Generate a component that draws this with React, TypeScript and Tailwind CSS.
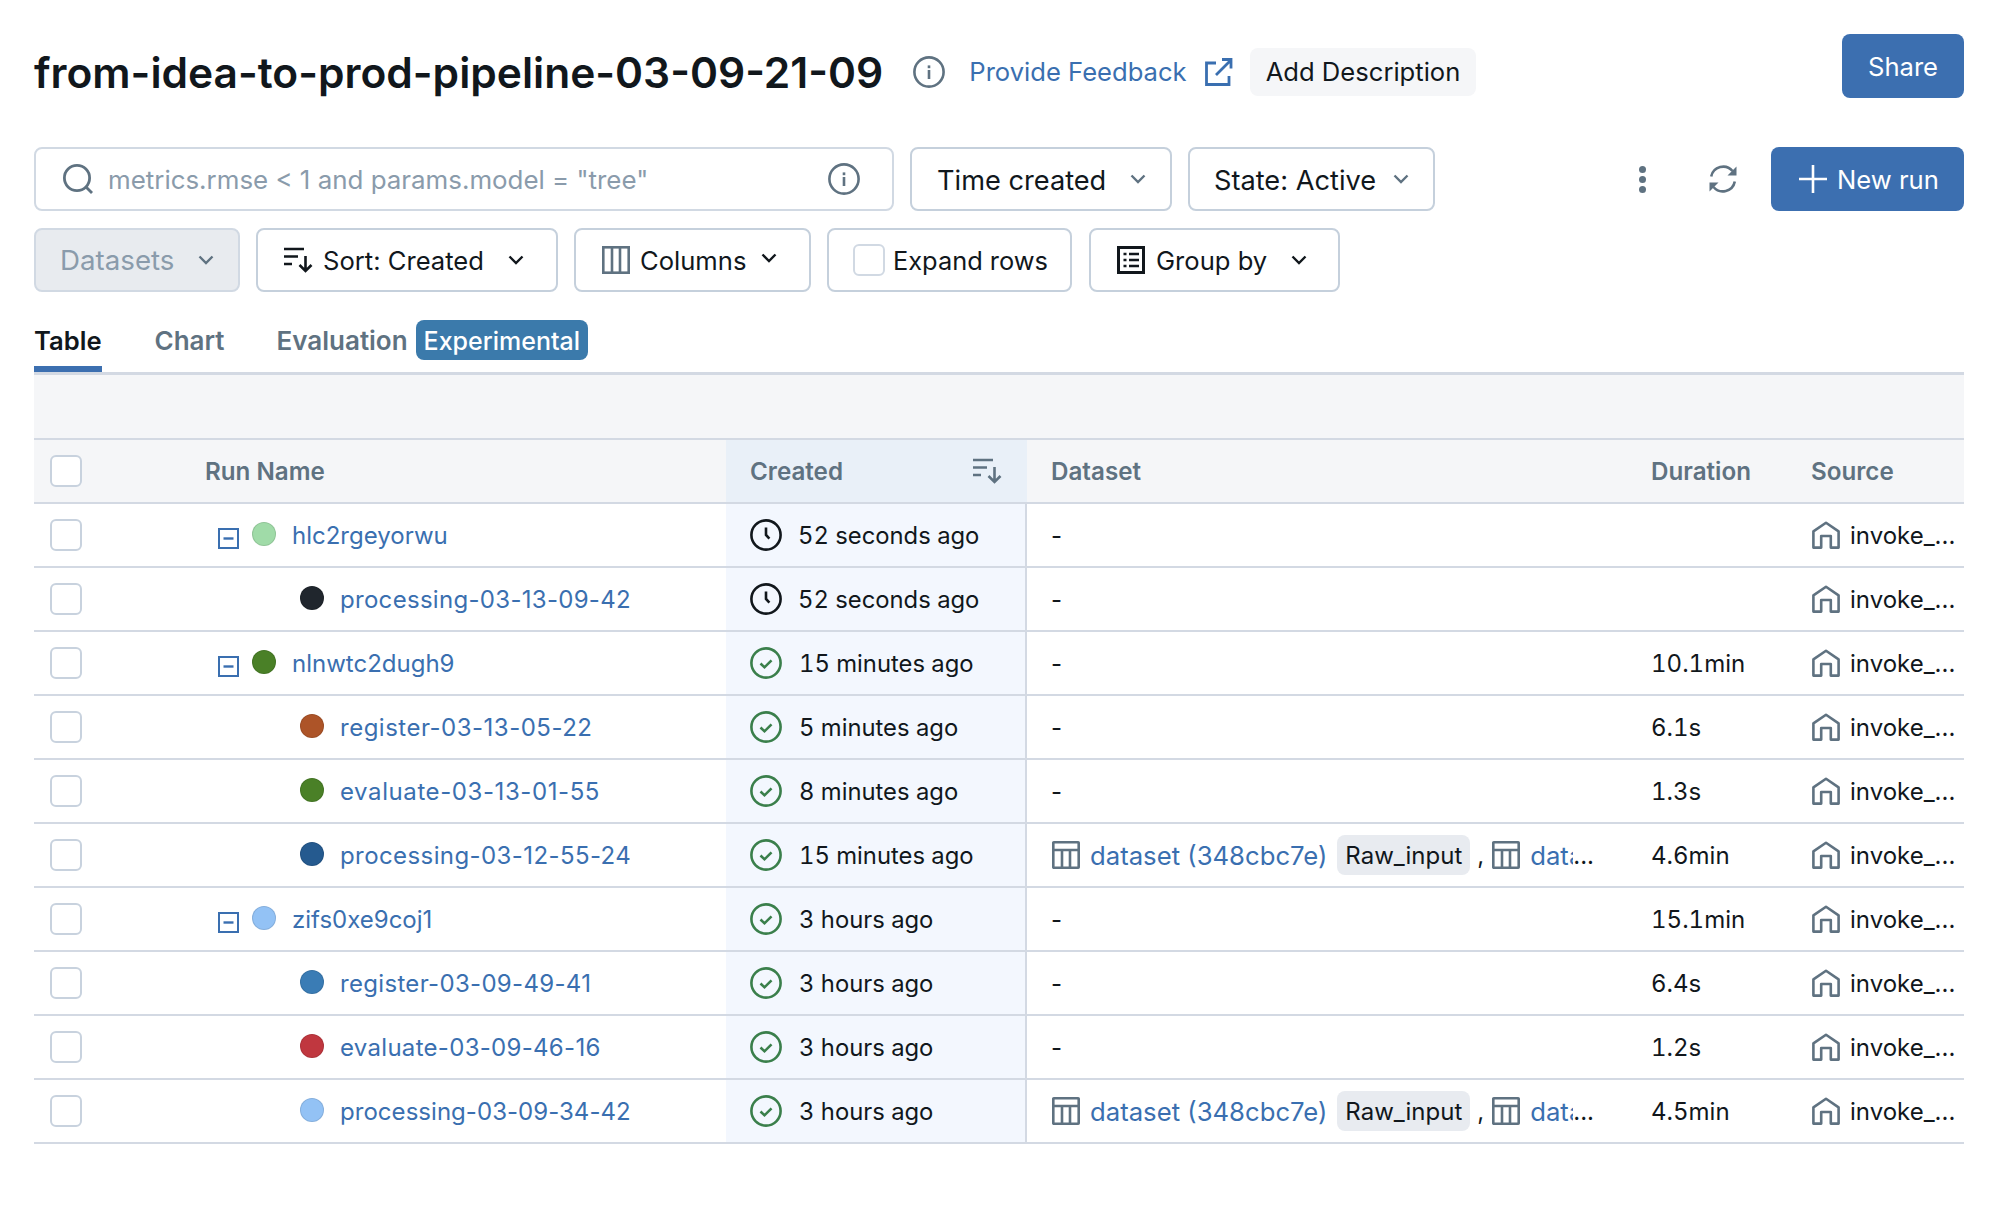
import React from "react";

const font = { fontFamily: "Inter, 'Liberation Sans', sans-serif" };

function Chevron({ className = "" }: { className?: string }) {
  return (
    <svg width="16" height="10" viewBox="0 0 16 10" fill="none" className={`shrink-0 ${className}`}>
      <path d="M1.5 1.5 8 8l6.5-6.5" stroke="currentColor" strokeWidth="2.4" />
    </svg>
  );
}
function Info({ size = 32 }: { size?: number }) {
  return (
    <svg width={size} height={size} viewBox="0 0 32 32" fill="none" className="shrink-0 text-[#5f7281]">
      <circle cx="16" cy="16" r="14.6" stroke="currentColor" strokeWidth="2.6" />
      <rect x="14.7" y="14" width="2.6" height="9" fill="currentColor" />
      <rect x="14.7" y="9.4" width="2.6" height="2.8" fill="currentColor" />
    </svg>
  );
}
function SortIcon({ className = "" }: { className?: string }) {
  return (
    <svg width="30" height="26" viewBox="0 0 30 26" fill="none" className={`shrink-0 ${className}`}>
      <path d="M0 2h20M0 9.5h14M0 17h8" stroke="currentColor" strokeWidth="2.6" />
      <path d="M21.5 9v15M15.5 18l6 6 6-6" stroke="currentColor" strokeWidth="2.6" />
    </svg>
  );
}
function TableIcon() {
  return (
    <svg width="28" height="28" viewBox="0 0 28 28" fill="none" className="shrink-0 text-[#5f7281]">
      <rect x="1.3" y="1.3" width="25.4" height="25.4" rx="0.5" stroke="currentColor" strokeWidth="2.6" />
      <path d="M1 9h26M10 9v18M18 9v18" stroke="currentColor" strokeWidth="2.6" />
    </svg>
  );
}
function HomeIcon() {
  return (
    <svg width="28" height="28" viewBox="0 0 28 28" fill="none" className="shrink-0 ml-px text-[#5f7281]">
      <path
        d="M1.4 26.6V10.4L14 1.8l12.6 8.6v16.2h-7.8V15H9.2v11.6H1.4Z"
        stroke="currentColor"
        strokeWidth="2.6"
        strokeLinejoin="round"
      />
    </svg>
  );
}
function Clock() {
  return (
    <svg width="32" height="32" viewBox="0 0 32 32" fill="none" className="shrink-0 text-[#11171c]">
      <circle cx="16" cy="16" r="14.6" stroke="currentColor" strokeWidth="2.6" />
      <path d="M16 8.5V16l3.4 3.6" stroke="currentColor" strokeWidth="2.6" />
    </svg>
  );
}
function Check() {
  return (
    <svg width="32" height="32" viewBox="0 0 32 32" fill="none" className="shrink-0 text-[#3a7f4b]">
      <circle cx="16" cy="16" r="14.6" stroke="currentColor" strokeWidth="2.6" />
      <path d="M10.5 16.5l4 3.8 7-7" stroke="currentColor" strokeWidth="2.6" />
    </svg>
  );
}
function Minus() {
  return (
    <svg width="21" height="21" viewBox="0 0 21 21" fill="none" className="shrink-0 mt-[6px] text-[#3a6fb0]">
      <rect x="1" y="1" width="19" height="19" stroke="currentColor" strokeWidth="2" />
      <path d="M5.5 10.5h10" stroke="currentColor" strokeWidth="2.4" />
    </svg>
  );
}
function Box() {
  return <div className="w-8 h-8 shrink-0 rounded-[6px] border-2 border-[#c8d2de] bg-white" />;
}

const btn =
  "h-16 flex items-center rounded-lg border-2 border-[#c5d0dc] bg-white leading-8 text-[#11171c] shrink-0 whitespace-nowrap";

type Row = {
  name: string;
  color: string;
  parent?: boolean;
  ago: string;
  done: boolean;
  duration?: string;
  dataset?: boolean;
  track?: string;
};

const rows: Row[] = [
  { name: "hlc2rgeyorwu", color: "#a0dba8", parent: true, ago: "52 seconds ago", done: false },
  { name: "processing-03-13-09-42", color: "#20262d", ago: "52 seconds ago", done: false, track: "tracking-[0.3px]" },
  { name: "nlnwtc2dugh9", color: "#4a8027", parent: true, ago: "15 minutes ago", done: true, duration: "10.1min" },
  { name: "register-03-13-05-22", color: "#ad5428", ago: "5 minutes ago", done: true, duration: "6.1s", track: "tracking-[0.5px]" },
  { name: "evaluate-03-13-01-55", color: "#4a8027", ago: "8 minutes ago", done: true, duration: "1.3s", track: "tracking-[0.59px]" },
  { name: "processing-03-12-55-24", color: "#255a8f", ago: "15 minutes ago", done: true, duration: "4.6min", dataset: true, track: "tracking-[0.41px]" },
  { name: "zifs0xe9coj1", color: "#93c2f5", parent: true, ago: "3 hours ago", done: true, duration: "15.1min" },
  { name: "register-03-09-49-41", color: "#3a7cb5", ago: "3 hours ago", done: true, duration: "6.4s", track: "tracking-[0.32px]" },
  { name: "evaluate-03-09-46-16", color: "#c0373f", ago: "3 hours ago", done: true, duration: "1.2s", track: "tracking-[0.3px]" },
  { name: "processing-03-09-34-42", color: "#93c2f5", ago: "3 hours ago", done: true, duration: "4.5min", dataset: true, track: "tracking-[0.04px]" },
];

function DataRow({ r }: { r: Row }) {
  return (
    <div className="flex h-16 border-b-2 border-[#d3d9e3] text-[24px] leading-8 text-[#11171c]">
      <div className="w-[692px] flex items-center pl-4">
        <Box />
        {r.parent ? (
          <div className="flex items-center pl-[136px]">
            <Minus />
            <span
              className="w-6 h-6 rounded-full ml-[13px] mt-[-2px] border border-black/10"
              style={{ backgroundColor: r.color }}
            />
            <span className="ml-4 pt-px text-[#3a6fb0]">{r.name}</span>
          </div>
        ) : (
          <div className="flex items-center pl-[218px]">
            <span className="w-6 h-6 rounded-full mt-[-2px] border border-black/10" style={{ backgroundColor: r.color }} />
            <span className={`ml-4 pt-px text-[#3a6fb0] ${r.track ?? ""}`}>{r.name}</span>
          </div>
        )}
      </div>
      <div className="w-[301px] flex items-center pl-6 bg-[#f3f7fe] border-r-2 border-[#d3d9e3]">
        {r.done ? <Check /> : <Clock />}
        <span className={r.done ? "ml-[17px] pt-px text-[23.8px] tabular-nums" : "ml-4 pt-px text-[23.8px] tabular-nums"}>
          {r.ago}
        </span>
      </div>
      <div className="w-[600px] flex items-center pl-6 whitespace-nowrap">
        {r.dataset ? (
          <>
            <span className="ml-px">
              <TableIcon />
            </span>
            <span className="ml-[10px] pt-px text-[25.7px] text-[#3a6fb0]">dataset (348cbc7e)</span>
            <span className="ml-[10px] h-10 flex items-center px-2 pt-px rounded-lg bg-[#e8ebf0]">Raw_input</span>
            <span className="ml-[7px] pt-px">,</span>
            <span className="ml-2">
              <TableIcon />
            </span>
            <span className="ml-[10px] pt-px w-[43px] overflow-hidden text-[25.7px] text-[#3a6fb0]">data</span>
            <span className="pt-px">...</span>
          </>
        ) : (
          <span className="pt-px">-</span>
        )}
      </div>
      <div className="w-[160px] flex items-center pl-6">
        <span className="pt-px tabular-nums">{r.duration}</span>
      </div>
      <div className="w-[177px] flex items-center pl-6 whitespace-nowrap">
        <HomeIcon />
        <span className="ml-[10px] pt-px">invoke_...</span>
      </div>
    </div>
  );
}

export default function App() {
  return (
    <div className="min-h-[1212px] bg-white pl-[34px] pr-[28px] pt-[34px]" style={font}>
      <div className="flex items-center justify-between h-16">
        <div className="flex items-center pt-3">
          <h1 className="text-[42.5px] leading-[48px] pt-[2px] font-semibold text-[#11171c] whitespace-nowrap">
            from-idea-to-prod-pipeline-03-09-21-09
          </h1>
          <div className="ml-[30px]">
            <Info size={32} />
          </div>
          <span className="ml-6 text-[25.6px] leading-8 text-[#3a6fb0] whitespace-nowrap">Provide Feedback</span>
          <svg width="28" height="28" viewBox="0 0 28 28" fill="none" className="ml-[18px] text-[#3a6fb0]">
            <path d="M11 5H1.5v21.5H24V18" stroke="currentColor" strokeWidth="2.8" />
            <path d="M11 17 26 2M17 1.5h9v9" stroke="currentColor" strokeWidth="2.8" />
          </svg>
          <span className="ml-[17px] h-12 flex items-center px-4 rounded-lg bg-[#f5f6f8] text-[25.6px] text-[#11171c] whitespace-nowrap">
            Add Description
          </span>
        </div>
        <button className="h-16 w-[122px] pt-[2px] rounded-lg bg-[#3c6fb0] text-white text-[25.6px]">Share</button>
      </div>

      <div className="flex items-center mt-[49px] h-16">
        <div className="w-[860px] h-16 flex items-center rounded-lg border-2 border-[#d1d9e3] pl-[26px] pr-[32px] shrink-0">
          <svg width="32" height="32" viewBox="0 0 32 32" fill="none" className="shrink-0 text-[#5f7281]">
            <circle cx="15" cy="15" r="12.6" stroke="currentColor" strokeWidth="2.8" />
            <path d="M24 24l6 6" stroke="currentColor" strokeWidth="2.8" />
          </svg>
          <span className="ml-[14px] pt-[3px] flex-1 text-[25.9px] text-[#8a9bab] whitespace-nowrap">
            metrics.rmse &lt; 1 and params.model = "tree"
          </span>
          <Info size={32} />
        </div>
        <div className={`${btn} w-[262px] ml-4 pl-[25px] pr-6 justify-between text-[27.2px]`}>
          <span className="pt-[3px]">Time created</span>
          <Chevron className="text-[#5f7281]" />
        </div>
        <div className={`${btn} w-[247px] ml-4 pl-6 pr-6 justify-between text-[27.2px]`}>
          <span className="pt-[3px]">State: Active</span>
          <Chevron className="text-[#5f7281]" />
        </div>
        <div className="flex-1 flex items-center justify-end">
          <div className="flex flex-col gap-[3px] text-[#5f7281]">
            <span className="w-[7px] h-[7px] rounded-full bg-current" />
            <span className="w-[7px] h-[7px] rounded-full bg-current" />
            <span className="w-[7px] h-[7px] rounded-full bg-current" />
          </div>
          <svg width="30" height="30" viewBox="0 0 30 30" fill="none" className="ml-[62px] text-[#5f7281]">
            <path d="M3.2 12.5A12.2 12.2 0 0 1 24.5 7" stroke="currentColor" strokeWidth="2.6" />
            <path d="M26.8 17.5A12.2 12.2 0 0 1 5.5 23" stroke="currentColor" strokeWidth="2.6" />
            <path d="M28.5 2.5v9h-9l9-9Z" fill="currentColor" />
            <path d="M1.5 27.5v-9h9l-9 9Z" fill="currentColor" />
          </svg>
          <button className="ml-[33px] h-16 w-[193px] rounded-lg bg-[#3c6fb0] text-white text-[25.6px] flex items-center pl-7">
            <svg width="28" height="28" viewBox="0 0 28 28" fill="none" className="shrink-0">
              <path d="M14 0v28M0 14h28" stroke="currentColor" strokeWidth="2.6" />
            </svg>
            <span className="ml-[10px] pt-[3px]">New run</span>
          </button>
        </div>
      </div>

      <div className="flex items-center mt-[17px] h-16">
        <div className="h-16 w-[206px] flex items-center justify-between rounded-lg border-2 border-[#d1d9e3] bg-[#e8ebef] pl-[24px] pr-[24px] text-[27.7px] text-[#8a9bab] shrink-0">
          <span className="pt-[2px]">Datasets</span>
          <Chevron className="text-[#5f7281]" />
        </div>
        <div className={`${btn} w-[302px] ml-4 pl-[26px] text-[25.6px]`}>
          <SortIcon />
          <span className="ml-[9px] pt-px">Sort: Created</span>
          <Chevron className="ml-[24px]" />
        </div>
        <div className={`${btn} w-[237px] ml-4 pl-[26px] text-[25.6px]`}>
          <svg width="28" height="28" viewBox="0 0 28 28" fill="none" className="shrink-0 text-[#5f7281]">
            <rect x="1.3" y="1.3" width="25.4" height="25.4" stroke="currentColor" strokeWidth="2.6" />
            <path d="M10 1v26M18 1v26" stroke="currentColor" strokeWidth="2.6" />
          </svg>
          <span className="ml-[10px] pt-px">Columns</span>
          <Chevron className="ml-[15px] mt-[-4px]" />
        </div>
        <div className={`${btn} w-[245px] ml-4 pl-6 text-[25.4px]`}>
          <div className="w-8 h-8 rounded-[6px] border-2 border-[#d1d9e3]" />
          <span className="ml-2 pt-px">Expand rows</span>
        </div>
        <div className={`${btn} w-[251px] ml-[17px] pl-[26px] text-[25.6px]`}>
          <svg width="28" height="28" viewBox="0 0 28 28" fill="none" className="shrink-0 text-[#11171c]">
            <rect x="1.5" y="1.5" width="25" height="25" stroke="currentColor" strokeWidth="3" />
            <path d="M6.5 8h3M12 8h10M6.5 14h3M12 14h10M6.5 20h3M12 20h10" stroke="currentColor" strokeWidth="2.6" />
          </svg>
          <span className="ml-[11px] pt-px">Group by</span>
          <Chevron className="ml-[24px]" />
        </div>
      </div>

      <div className="flex items-start h-[83px] border-b-[3px] border-[#d3d9e3] text-[26px] font-semibold leading-8 text-[#5f7281]">
        <div className="h-[80px] flex items-end border-b-[6px] border-[#3c6fb0] text-[#11171c] text-[25.6px]">
          <span className="pb-[9px]">Table</span>
        </div>
        <div className="h-[80px] flex items-end ml-[53px]">
          <span className="pb-[15px]">Chart</span>
        </div>
        <div className="h-[80px] flex items-end ml-[52px]">
          <span className="pb-[15px]">Evaluation</span>
          <span className="ml-[8px] mb-[12px] h-10 pt-[2px] flex items-center px-2 rounded-lg bg-[#3b7aab] text-white text-[25px] font-medium">
            Experimental
          </span>
        </div>
      </div>

      <div className="h-[65px] bg-[#f5f6f8] border-b-2 border-[#d3d9e3]" />

      <div className="flex h-[64px] border-b-2 border-[#d3d9e3] bg-[#f5f6f8] text-[24.2px] font-semibold text-[#5f7281]">
        <div className="w-[692px] flex items-center pl-4">
          <Box />
          <span className="ml-[123px] pt-[3px]">Run Name</span>
        </div>
        <div className="w-[301px] flex items-center justify-between pl-6 pr-6 bg-[#e9f0f8]">
          <span className="pt-[3px]">Created</span>
          <SortIcon />
        </div>
        <div className="w-[600px] flex items-center pl-6">
          <span className="pt-[3px]">Dataset</span>
        </div>
        <div className="w-[160px] flex items-center pl-6">
          <span className="pt-[3px]">Duration</span>
        </div>
        <div className="w-[177px] flex items-center pl-6">
          <span className="pt-[3px]">Source</span>
        </div>
      </div>

      {rows.map((r) => (
        <DataRow key={r.name} r={r} />
      ))}
    </div>
  );
}
